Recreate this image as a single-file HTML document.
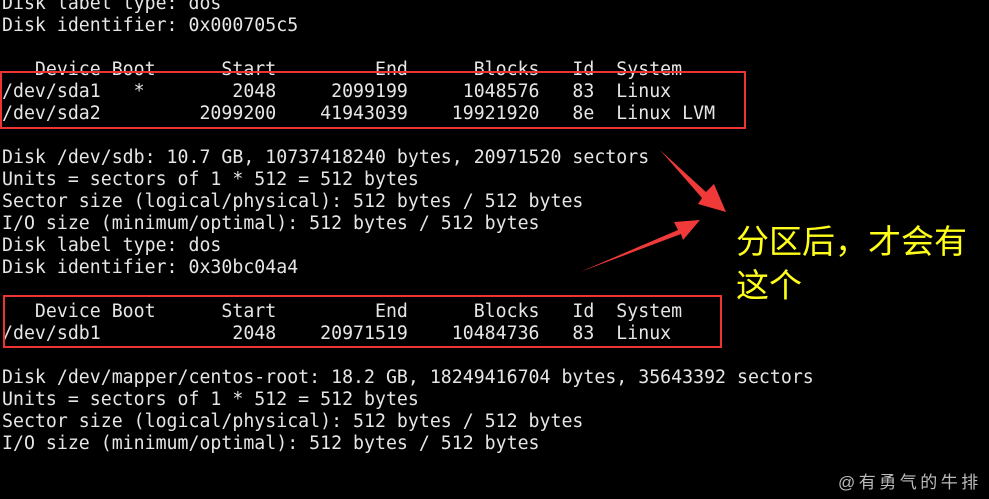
<!DOCTYPE html>
<html><head><meta charset="utf-8"><style>
html,body{margin:0;padding:0;background:#000;width:989px;height:499px;overflow:hidden;position:relative}
pre{position:absolute;left:2px;top:-7px;margin:0;font-family:"DejaVu Sans Mono","Liberation Mono",monospace;font-size:18.2px;line-height:22px;color:#e6e6e6;letter-spacing:0.02px}
.box{position:absolute;border:2px solid #ec3434}
.cn{position:absolute;left:736px;color:#ffff1a;font-family:"Liberation Sans","Noto Sans CJK SC",sans-serif;font-size:33px;line-height:44px;top:220px;width:260px}
.wm{position:absolute;left:838px;top:468px;color:#bbb;font-family:"Liberation Sans","Noto Sans CJK SC",sans-serif;font-size:17px;letter-spacing:3.5px}
</style></head><body>
<pre>Disk label type: dos
Disk identifier: 0x000705c5

   Device Boot      Start         End      Blocks   Id  System
/dev/sda1   *        2048     2099199     1048576   83  Linux
/dev/sda2         2099200    41943039    19921920   8e  Linux LVM

Disk /dev/sdb: 10.7 GB, 10737418240 bytes, 20971520 sectors
Units = sectors of 1 * 512 = 512 bytes
Sector size (logical/physical): 512 bytes / 512 bytes
I/O size (minimum/optimal): 512 bytes / 512 bytes
Disk label type: dos
Disk identifier: 0x30bc04a4

   Device Boot      Start         End      Blocks   Id  System
/dev/sdb1            2048    20971519    10484736   83  Linux

Disk /dev/mapper/centos-root: 18.2 GB, 18249416704 bytes, 35643392 sectors
Units = sectors of 1 * 512 = 512 bytes
Sector size (logical/physical): 512 bytes / 512 bytes
I/O size (minimum/optimal): 512 bytes / 512 bytes</pre>
<div class="box" style="left:0;top:71px;width:742px;height:54px"></div>
<div class="box" style="left:3px;top:295px;width:715px;height:49px"></div>
<svg style="position:absolute;left:0;top:0" width="989" height="499">
<polygon points="660,150 706,192 714,184 726,212 698,204 702,198" fill="#f03a3a"/>
<polygon points="580,272 678,230 674,222 700,220 683,240 681,234" fill="#f03a3a"/>
</svg>
<div class="cn">分区后，才会有<br>这个</div>
<div class="wm">@有勇气的牛排</div>
</body></html>
